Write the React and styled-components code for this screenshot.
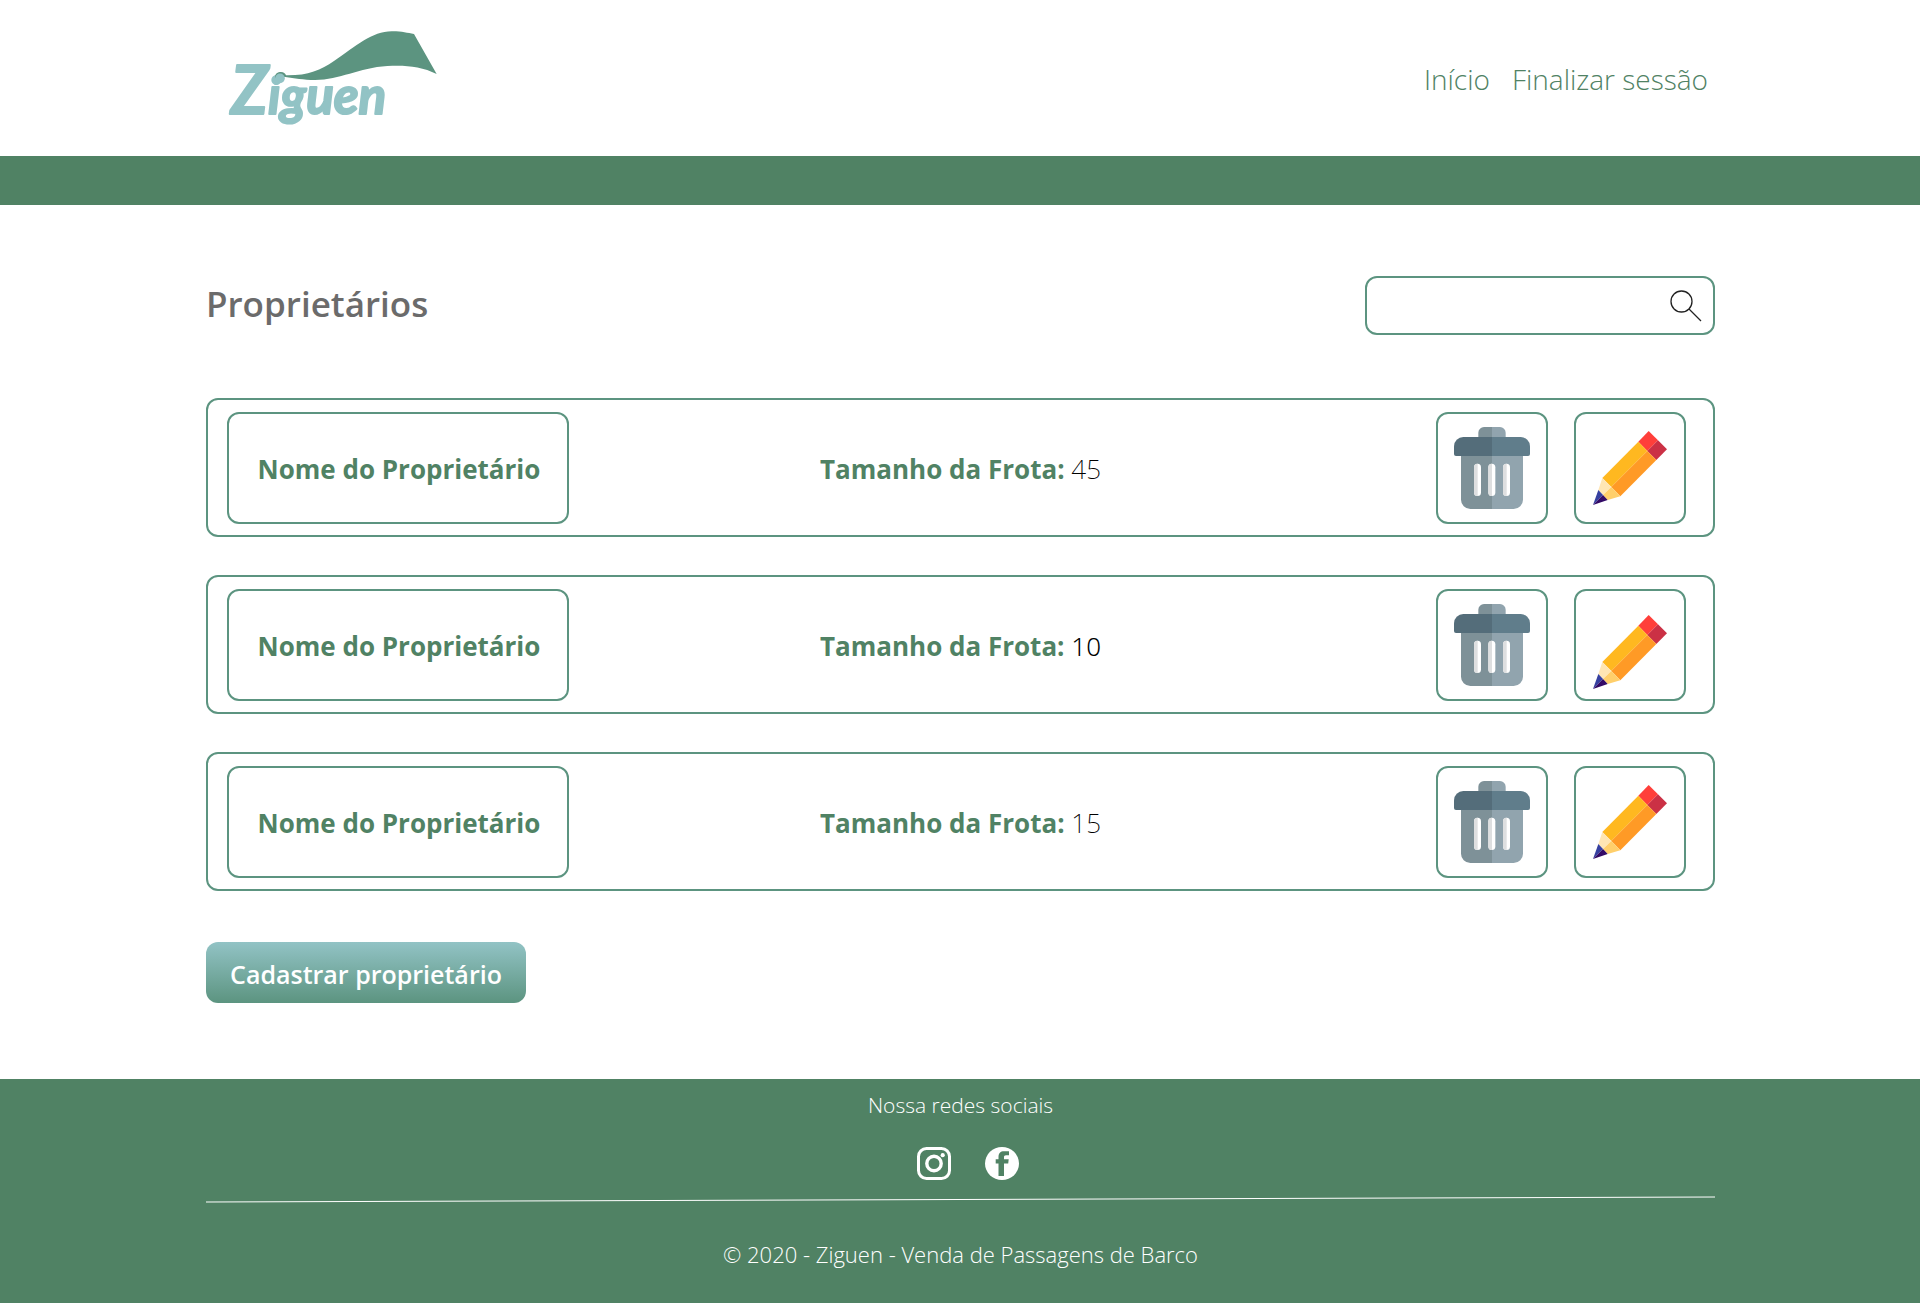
import React from 'react';
import styled, { createGlobalStyle, ThemeProvider } from 'styled-components';

const theme = {
  green: '#508264',
  teal: '#5c9480',
  aqua: '#92c3c5',
  gray: '#6b6b6b',
  radius: '12px',
};

const GlobalStyle = createGlobalStyle`
  *, *::before, *::after { box-sizing: border-box; }
  body {
    margin: 0;
    background: #fff;
    color: #000;
    font-family: 'Segoe UI', 'Open Sans', 'Noto Sans', sans-serif;
  }
  #root { min-height: 100vh; display: flex; flex-direction: column; }
  h1, p, ul { margin: 0; padding: 0; }
  ul { list-style: none; }
  a { text-decoration: none; color: inherit; }
  svg { display: block; flex: none; }
`;

const Container = styled.div`
  width: 100%;
  padding: 0 205px 0 206px;

  @media (max-width: 1400px) {
    padding: 0 32px;
  }
`;

const HeaderBar = styled.header`
  border-bottom: 49px solid ${({ theme }) => theme.green};
`;

const HeaderInner = styled(Container)`
  display: flex;
  align-items: center;
  justify-content: space-between;
  min-height: 156px;
`;

const LogoLink = styled.a`
  margin-left: 22px;
`;

const Nav = styled.nav`
  display: flex;
  gap: 22px;
  padding: 2px 7px 0 0;
`;

const NavLink = styled.a`
  font-size: 28px;
  font-weight: 300;
  line-height: 40px;
  color: ${({ theme }) => theme.green};
`;

const Main = styled.main`
  flex: 1;
  padding: 71px 0 76px;
`;

const TitleBar = styled.div`
  display: flex;
  align-items: flex-start;
  justify-content: space-between;
  margin-bottom: 63px;
`;

const Title = styled.h1`
  font-size: 35px;
  font-weight: 600;
  line-height: 56px;
  color: ${({ theme }) => theme.gray};
`;

const SearchForm = styled.form`
  display: flex;
  align-items: center;
  width: 350px;
  height: 59px;
  padding-right: 11px;
  border: 2px solid ${({ theme }) => theme.teal};
  border-radius: ${({ theme }) => theme.radius};
`;

const SearchInput = styled.input`
  flex: 1;
  min-width: 0;
  height: 100%;
  padding: 0 16px;
  border: 0;
  outline: 0;
  background: transparent;
  font: inherit;
  font-size: 22px;
`;

const SearchButton = styled.button`
  padding: 0;
  border: 0;
  background: none;
  cursor: pointer;
`;

const OwnerList = styled.ul`
  display: grid;
  gap: 38px;
`;

const OwnerRow = styled.li`
  display: grid;
  grid-template-columns: 1fr auto 1fr;
  align-items: center;
  padding: 12px 19px 11px;
  border: 2px solid ${({ theme }) => theme.teal};
  border-radius: ${({ theme }) => theme.radius};
`;

const OwnerName = styled.div`
  display: flex;
  align-items: center;
  justify-content: center;
  width: 342px;
  height: 112px;
  padding: 2px 0 0 2px;
  border: 2px solid ${({ theme }) => theme.teal};
  border-radius: ${({ theme }) => theme.radius};
  font-size: 26px;
  font-weight: 700;
  line-height: 36px;
  color: ${({ theme }) => theme.green};
`;

const FleetSize = styled.p`
  && { padding-top: 2px; }
  font-size: 26px;
  line-height: 36px;
`;

const FleetLabel = styled.strong`
  font-weight: 700;
  color: ${({ theme }) => theme.green};
`;

const FleetValue = styled.span`
  font-family: 'Noto Sans', 'Open Sans', sans-serif;
  font-weight: ${({ $strong }) => ($strong ? 300 : 200)};
`;

const Actions = styled.div`
  display: flex;
  justify-self: end;
  gap: 26px;
  padding-right: 8px;
`;

const IconButton = styled.button`
  display: flex;
  align-items: center;
  justify-content: center;
  width: 112px;
  height: 112px;
  padding: ${({ $lowered }) => ($lowered ? '14px 0 0' : '0')};
  border: 2px solid ${({ theme }) => theme.teal};
  border-radius: ${({ theme }) => theme.radius};
  background: #fff;
  cursor: pointer;
`;

const PrimaryButton = styled.button`
  width: 320px;
  height: 61px;
  margin-top: 51px;
  padding: 2px 0 0;
  border: 0;
  border-radius: ${({ theme }) => theme.radius};
  background: linear-gradient(${({ theme }) => theme.aqua}, ${({ theme }) => theme.teal});
  color: #fff;
  font: inherit;
  font-size: 25px;
  font-weight: 600;
  cursor: pointer;
`;

const FooterBar = styled.footer`
  padding: 10px 0 33px;
  background: ${({ theme }) => theme.green};
  color: #fff;
  font-weight: 300;
  line-height: 32px;
  text-align: center;
`;

const SocialTitle = styled.p`
  font-size: 21px;
`;

const SocialLinks = styled.div`
  display: flex;
  justify-content: center;
  gap: 34px;
  padding: 26px 0 14px 15px;
`;

const Divider = styled.svg`
  width: 100%;
  height: 10px;
`;

const Copyright = styled.p`
  margin-top: 33px;
  font-size: 22px;
`;

const Wordmark = styled.text`
  font-family: Lato, 'Open Sans', sans-serif;
  font-size: 51px;
  font-style: italic;
  font-weight: 700;
  fill: ${({ theme }) => theme.aqua};
  stroke: ${({ theme }) => theme.aqua};
  stroke-width: 2px;
  stroke-linejoin: round;
`;

const Initial = styled.tspan`
  font-size: 66px;
`;

function Logo() {
  return (
    <svg width="212" height="128" viewBox="228 14 212 128" role="img" aria-label="Ziguen">
      <Wordmark x="231" y="114"><Initial>Z</Initial>iguen</Wordmark>
      <g transform="translate(200 10) scale(.33333)">
        <path
          fill="#5c9480"
          d="M225 203C225 191 233 186 243 186C251 186 256 190 258 196C322 197 362 181 402 153C468 108 516 64 575 63.500C604 63 622 68 642 72L710 192C664 168 612 165 562 168C476 173 420 210 345 210C310 210 283 204 256 201Z"
        />
        <circle cx="240" cy="205" r="14.500" fill="#92c3c5" />
      </g>
    </svg>
  );
}

function SearchIcon() {
  return (
    <svg width="32" height="32" viewBox="0 0 32 32" fill="none" stroke="#222" strokeWidth="1.300">
      <circle cx="11.500" cy="11.500" r="10.500" />
      <path d="M19 19L31 31" />
    </svg>
  );
}

function TrashIcon() {
  return (
    <svg width="76" height="82" viewBox="342 501 228 246" aria-hidden="true">
      <path fill="#7e9198" d="M456 501h-24a17 17 0 0 0-17 17v14h41zM363 587h93v160h-65a28 28 0 0 1-28-28z" />
      <path fill="#91a4ae" d="M456 501h24a17 17 0 0 1 17 17v14h-41zM549 587h-93v160h65a28 28 0 0 0 28-28z" />
      <path fill="#546d7a" d="M456 531h-86a28 28 0 0 0-28 28v23a6 6 0 0 0 6 6h108z" />
      <path fill="#607d8b" d="M456 531h86a28 28 0 0 1 28 28v23a6 6 0 0 1-6 6H456z" />
      {[402, 445, 489].map((x) => (
        <g key={x}>
          <rect x={x} y="611" width="21" height="97" rx="10.500" fill="#fff" />
          <path fill="#dedfe0" d={`M${x + 11} 611a10.500 10.500 0 0 0-11 10.500v76a10.500 10.500 0 0 0 11 10.500z`} />
        </g>
      ))}
    </svg>
  );
}

function PencilIcon() {
  return (
    <svg width="74" height="74" viewBox="759 513 222 222" aria-hidden="true">
      <path fill="#ff3f3a" d="M926 513l28 28-32 32-27-28z" />
      <path fill="#cb3145" d="M954 541l27 27-32 32-27-27z" />
      <path fill="#ffb820" d="M895 545l27 28-108 108-27-27z" />
      <path fill="#ff9a26" d="M922 573l27 27-108 109-27-28z" />
      <path fill="#ffe6b4" d="M787 654l27 27-25 24-14-15z" />
      <path fill="#ffcf6b" d="M814 681l27 28-38 11-14-15z" />
      <path fill="#3640a0" d="M775 690l14 15-30 30z" />
      <path fill="#330a66" d="M789 705l14 15-44 15z" />
    </svg>
  );
}

function InstagramIcon() {
  return (
    <svg width="34" height="34" viewBox="0 0 34 34" fill="none" stroke="#fff">
      <rect x="1.500" y="1.500" width="31" height="30" rx="8" strokeWidth="3" />
      <circle cx="17" cy="16.500" r="7.200" strokeWidth="3.400" />
      <circle cx="25.700" cy="8.200" r="2.100" fill="#fff" stroke="none" />
    </svg>
  );
}

function FacebookIcon() {
  return (
    <svg width="34" height="34" viewBox="0 0 34 34">
      <ellipse cx="17" cy="16.500" rx="17" ry="16.500" fill="#fff" />
      <path
        fill="#508264"
        d="M13.500 29V16.500H10.700V12.300H13.500V10C13.500 6.200 15.500 4.200 19 4.200H24V8.300H21C19.600 8.300 19 9 19 10.200V12.300H23.700L23.200 16.500H19V29Z"
      />
    </svg>
  );
}

const owners = [
  { id: 1, name: 'Nome do Proprietário', fleet: 45 },
  { id: 2, name: 'Nome do Proprietário', fleet: 10, strong: true, lowered: true },
  { id: 3, name: 'Nome do Proprietário', fleet: 15 },
];

export default function App() {
  return (
    <ThemeProvider theme={theme}>
      <GlobalStyle />
      <HeaderBar>
        <HeaderInner>
          <LogoLink href="#inicio"><Logo /></LogoLink>
          <Nav>
            <NavLink href="#inicio">Início</NavLink>
            <NavLink href="#sair">Finalizar sessão</NavLink>
          </Nav>
        </HeaderInner>
      </HeaderBar>

      <Main>
        <Container>
          <TitleBar>
            <Title>Proprietários</Title>
            <SearchForm role="search" onSubmit={(e) => e.preventDefault()}>
              <SearchInput type="text" aria-label="Buscar proprietário" />
              <SearchButton type="submit" aria-label="Buscar"><SearchIcon /></SearchButton>
            </SearchForm>
          </TitleBar>

          <OwnerList>
            {owners.map((owner) => (
              <OwnerRow key={owner.id}>
                <OwnerName>{owner.name}</OwnerName>
                <FleetSize>
                  <FleetLabel>Tamanho da Frota:</FleetLabel>{' '}
                  <FleetValue $strong={owner.strong}>{owner.fleet}</FleetValue>
                </FleetSize>
                <Actions>
                  <IconButton type="button" aria-label="Excluir"><TrashIcon /></IconButton>
                  <IconButton type="button" aria-label="Editar" $lowered={owner.lowered}><PencilIcon /></IconButton>
                </Actions>
              </OwnerRow>
            ))}
          </OwnerList>

          <PrimaryButton type="button">Cadastrar proprietário</PrimaryButton>
        </Container>
      </Main>

      <FooterBar>
        <Container>
          <SocialTitle>Nossa redes sociais</SocialTitle>
          <SocialLinks>
            <a href="#instagram" aria-label="Instagram"><InstagramIcon /></a>
            <a href="#facebook" aria-label="Facebook"><FacebookIcon /></a>
          </SocialLinks>
          <Divider viewBox="0 0 1509 10" preserveAspectRatio="none" aria-hidden="true">
            <path d="M0 7L1509 2" stroke="#fff" strokeWidth="1" />
          </Divider>
          <Copyright>© 2020 - Ziguen - Venda de Passagens de Barco</Copyright>
        </Container>
      </FooterBar>
    </ThemeProvider>
  );
}
